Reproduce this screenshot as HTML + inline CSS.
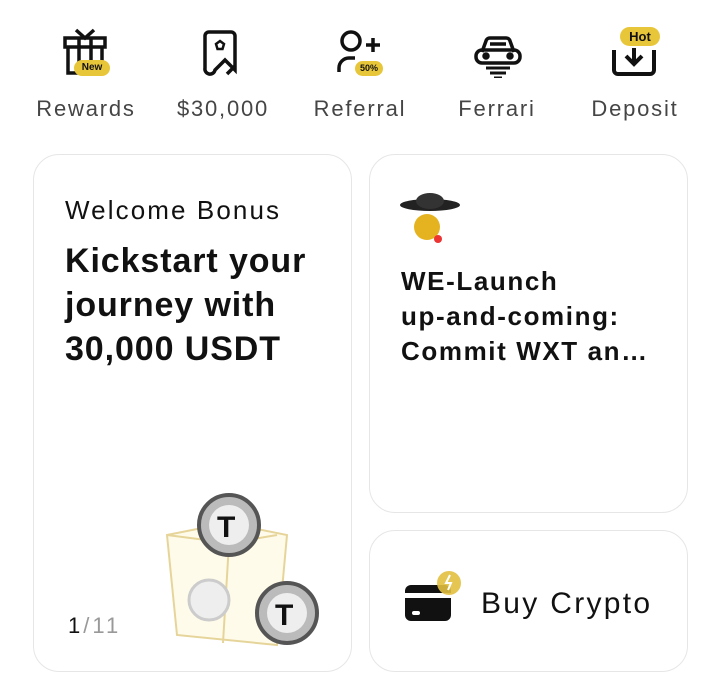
<!DOCTYPE html>
<html><head><meta charset="utf-8"><style>
*{margin:0;padding:0;box-sizing:border-box}
body{width:720px;height:684px;background:#fff;font-family:"Liberation Sans",sans-serif;position:relative;overflow:hidden;color:#111}
.lbl{position:absolute;top:96px;width:160px;text-align:center;font-size:22px;color:#454545;letter-spacing:1.8px}
.ic{position:absolute;top:28px}
.card{position:absolute;border:1px solid #e6e6e6;border-radius:26px;background:#fff}
.badge{position:absolute;background:#e8c63a;border-radius:8px;font-size:10px;font-weight:bold;color:#111;text-align:center;line-height:14px}
</style></head><body>
<svg class="ic" style="left:62px" width="48" height="50" viewBox="0 0 48 50" fill="none" stroke="#111" stroke-width="3.5"><path d="M3 10h40v9H3z"/><path d="M6 19v26h24M40 19v18M17 10v35M29 10v30M14 2l9 8 9-8"/></svg>
<div class="badge" style="left:74px;top:60px;width:36px;height:16px;line-height:16px">New</div>
<svg class="ic" style="left:200px" width="46" height="50" viewBox="0 0 44 50" fill="none" stroke="#111" stroke-width="3.5"><path d="M4 40V8a4 4 0 0 1 4-4h22a4 4 0 0 1 4 4v34l-10-10-10 10a4 4 0 0 1-10-2z"/><path d="M34 38l-8 8"/><path d="M19 13l4 3-1.5 5h-5L15 16z" stroke-width="2.5"/></svg>
<svg class="ic" style="left:336px" width="50" height="50" viewBox="0 0 50 50" fill="none" stroke="#111" stroke-width="3.5"><circle cx="15" cy="13" r="9"/><path d="M3 44v-4a10 10 0 0 1 10-10h6"/><path d="M30 17h14M37 10v14"/></svg>
<div class="badge" style="left:355px;top:61px;width:28px;height:15px;font-size:9px">50%</div>
<svg class="ic" style="left:471px" width="54" height="50" viewBox="0 0 52 50" fill="none" stroke="#111" stroke-width="3.5"><path d="M10 24l4-11a4 4 0 0 1 4-3h16a4 4 0 0 1 4 3l4 11"/><rect x="4" y="22" width="44" height="13" rx="6"/><path d="M18 16h16"/><path d="M14 40h24M18 45h16M22 50h8" stroke-width="3"/><circle cx="14" cy="28" r="2" fill="#111"/><circle cx="38" cy="28" r="2" fill="#111"/></svg>
<svg class="ic" style="left:609px" width="52" height="50" viewBox="0 0 50 50" fill="none" stroke="#111" stroke-width="4"><path d="M4 22v20a4 4 0 0 0 4 4h32a4 4 0 0 0 4-4V22"/><path d="M24 20v15M16 28l8 8 8-8"/></svg>
<div class="badge" style="left:620px;top:27px;width:40px;height:19px;line-height:19px;font-size:13px;border-radius:10px">Hot</div>
<div class="lbl" style="left:6px">Rewards</div>
<div class="lbl" style="left:143px">$30,000</div>
<div class="lbl" style="left:280px">Referral</div>
<div class="lbl" style="left:417px">Ferrari</div>
<div class="lbl" style="left:555px">Deposit</div>

<div class="card" style="left:33px;top:154px;width:319px;height:518px">
<div style="position:absolute;left:31px;top:40px;font-size:26px;color:#111;letter-spacing:2.1px">Welcome Bonus</div>
<div style="position:absolute;left:31px;top:84px;font-size:34px;font-weight:bold;line-height:44px;letter-spacing:0.9px">Kickstart your<br>journey with<br>30,000 USDT</div>
<div style="position:absolute;left:34px;top:458px;font-size:22px;color:#111;letter-spacing:3px">1<span style="color:#999">/11</span></div>
<svg style="position:absolute;left:125px;top:330px" width="170" height="170" viewBox="0 0 170 170">
<path d="M8 50l60-12 60 12-10 110-100-10z" fill="#fffbea" stroke="#e6d59a" stroke-width="2"/>
<path d="M70 58l48-8M70 58L8 50M70 58l-6 100" stroke="#e6d59a" stroke-width="2" fill="none"/>
<circle cx="70" cy="40" r="30" fill="#bbb" stroke="#555" stroke-width="4"/><circle cx="70" cy="40" r="20" fill="#eee"/><text x="58" y="52" font-size="30" font-weight="bold" fill="#111">T</text>
<circle cx="50" cy="115" r="20" fill="#eee" stroke="#ccc" stroke-width="3"/>
<circle cx="128" cy="128" r="30" fill="#bbb" stroke="#555" stroke-width="4"/><circle cx="128" cy="128" r="20" fill="#eee"/><text x="116" y="140" font-size="30" font-weight="bold" fill="#111">T</text>
</svg>
</div>

<div class="card" style="left:369px;top:154px;width:319px;height:359px">
<svg style="position:absolute;left:30px;top:36px" width="64" height="56" viewBox="0 0 64 56"><ellipse cx="30" cy="14" rx="30" ry="6" fill="#222"/><ellipse cx="30" cy="10" rx="14" ry="8" fill="#333"/><circle cx="27" cy="36" r="13" fill="#e5b320"/><circle cx="38" cy="48" r="4" fill="#e33"/></svg>
<div style="position:absolute;left:31px;top:109px;font-size:26px;font-weight:bold;line-height:35px;letter-spacing:1.6px">WE-Launch<br>up-and-coming:<br>Commit WXT an…</div>
</div>

<div class="card" style="left:369px;top:530px;width:319px;height:142px">
<svg style="position:absolute;left:34px;top:38px" width="60" height="56" viewBox="0 0 60 56"><rect x="1" y="16" width="46" height="36" rx="6" fill="#111"/><rect x="1" y="24" width="46" height="5" fill="#fff"/><rect x="8" y="42" width="8" height="4" rx="2" fill="#fff"/><circle cx="45" cy="14" r="12" fill="#e2c040" opacity=".9"/><path d="M46 6l-4 8h5l-3 7" stroke="#fff" stroke-width="2" fill="none"/></svg>
<div style="position:absolute;left:111px;top:56px;font-size:30px;color:#111;letter-spacing:2.3px">Buy Crypto</div>
</div>
</body></html>
